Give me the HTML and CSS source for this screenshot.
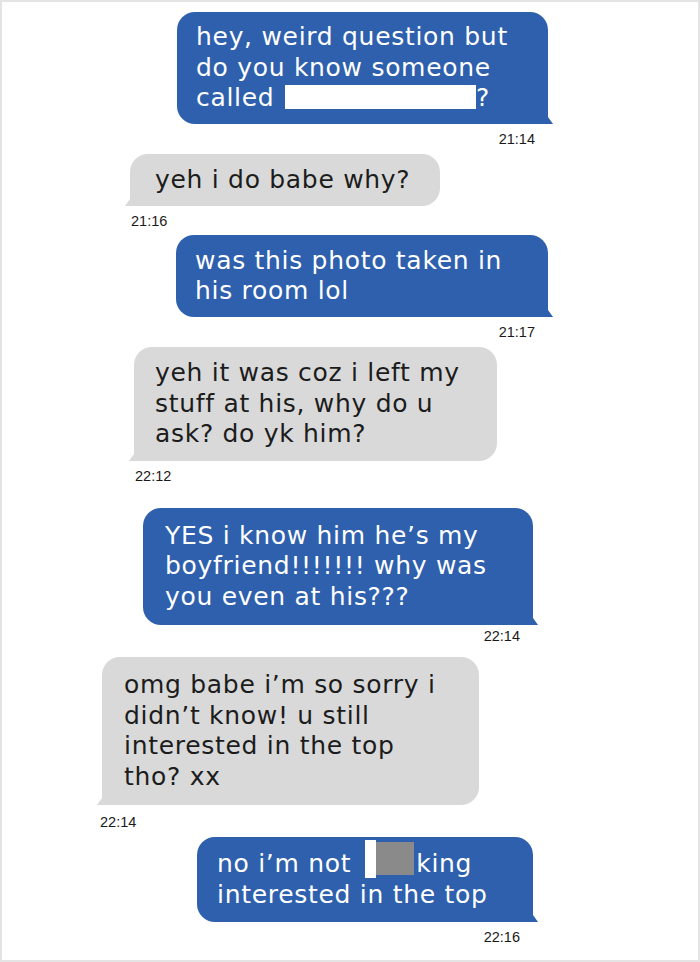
FILE: index.html
```html
<!DOCTYPE html>
<html lang="en">
<head>
<meta charset="utf-8">
<title>Chat</title>
<link rel="stylesheet" href="styles.css">
</head>
<body>
<div class="frame">
  <div class="chat">
    <div class="msg out m1">
      <div class="bubble">hey, weird question but<br>do you know someone<br>called <span class="redact-box"></span>?</div>
      <div class="time">21:14</div>
    </div>
    <div class="msg in m2">
      <div class="bubble">yeh i do babe why?</div>
      <div class="time">21:16</div>
    </div>
    <div class="msg out m3">
      <div class="bubble">was this photo taken in<br>his room lol</div>
      <div class="time">21:17</div>
    </div>
    <div class="msg in m4">
      <div class="bubble">yeh it was coz i left my<br>stuff at his, why do u<br>ask? do yk him?</div>
      <div class="time">22:12</div>
    </div>
    <div class="msg out m5">
      <div class="bubble">YES i know him he’s my<br>boyfriend!!!!!!! why was<br>you even at his???</div>
      <div class="time">22:14</div>
    </div>
    <div class="msg in m6">
      <div class="bubble">omg babe i’m so sorry i<br>didn’t know! u still<br>interested in the top<br>tho? xx</div>
      <div class="time">22:14</div>
    </div>
    <div class="msg out m7">
      <div class="bubble">no i’m not<span class="redact-strip"></span><span class="redact-grey"></span>king<br>interested in the top</div>
      <div class="time">22:16</div>
    </div>
  </div>
</div>
</body>
</html>
```

FILE: styles.css
```css
html, body {
  margin: 0;
  padding: 0;
  background: #ffffff;
}

.frame {
  width: 700px;
  height: 962px;
  box-sizing: border-box;
  border: 2px solid #e4e4e4;
  overflow: hidden;
}

.chat {
  display: flex;
  flex-direction: column;
  padding-top: 10px;
}

.msg {
  display: flex;
  flex-direction: column;
}

.msg.out {
  align-items: flex-end;
}

.msg.in {
  align-items: flex-start;
}

.bubble {
  position: relative;
  box-sizing: border-box;
  padding: 11px 20px;
  border-radius: 18px;
  font-family: "DejaVu Sans", "Liberation Sans", sans-serif;
  font-size: 25px;
  letter-spacing: 0.7px;
  line-height: 30.5px;
  white-space: nowrap;
}

.out .bubble {
  background: #2e60ad;
  color: #ffffff;
  border-bottom-right-radius: 0;
}

.in .bubble {
  background: #d9d9d9;
  color: #1c1c1c;
  border-bottom-left-radius: 0;
  padding-left: 23px;
}

.out .bubble::after {
  content: "";
  position: absolute;
  right: -5px;
  bottom: 0;
  border-left: 5px solid #2e60ad;
  border-top: 7px solid transparent;
}

.in .bubble::after {
  content: "";
  position: absolute;
  left: -5px;
  bottom: 0;
  border-right: 5px solid #d9d9d9;
  border-top: 7px solid transparent;
}

.time {
  font-family: "Liberation Sans", Arial, sans-serif;
  font-size: 14.5px;
  line-height: 16px;
  color: #1a1a1a;
  margin-top: 7px;
}

.out .time {
  margin-right: 13px;
}

.in .time {
  margin-left: 1px;
}

/* individual message placement */
.m1 { margin-right: 150px; }
.m1 .bubble { width: 371px; padding-top: 10px; padding-bottom: 10px; padding-left: 19px; }

.m2 { margin-left: 128px; margin-top: 7px; }
.m2 .bubble { width: 310px; padding-left: 25px; }

.m3 { margin-right: 150px; margin-top: 6px; }
.m3 .bubble { width: 372px; padding-top: 10.5px; padding-bottom: 10.5px; padding-left: 19px; }

.m4 { margin-left: 132px; margin-top: 7px; }
.m4 .bubble { width: 363px; padding-left: 21px; }

.m5 { margin-right: 165px; margin-top: 24px; }
.m5 .bubble { width: 390px; padding-top: 13px; padding-bottom: 13px; padding-left: 22px; }
.m5 .time { margin-top: 3px; }

.m6 { margin-left: 100px; margin-top: 13px; }
.m6 .bubble { width: 377px; padding-top: 13px; padding-bottom: 13px; padding-left: 22px; }
.m6 .time { margin-top: 9px; margin-left: -2px; }

.m7 { margin-right: 165px; margin-top: 7px; }
.m7 .bubble { width: 336px; padding-top: 12px; padding-bottom: 12px; padding-left: 20px; }

/* redactions */
.redact-box {
  display: inline-block;
  width: 191px;
  height: 24px;
  background: #ffffff;
  vertical-align: -3px;
  margin-left: 2px;
}

.redact-strip {
  display: inline-block;
  width: 11px;
  height: 38px;
  margin-top: -14px;
  background: #ffffff;
  vertical-align: -6px;
  margin-left: 14px;
}

.redact-grey {
  display: inline-block;
  width: 38px;
  height: 33px;
  margin-top: -10px;
  background: #8a8a8a;
  vertical-align: -3px;
  margin-right: 2px;
}
```
